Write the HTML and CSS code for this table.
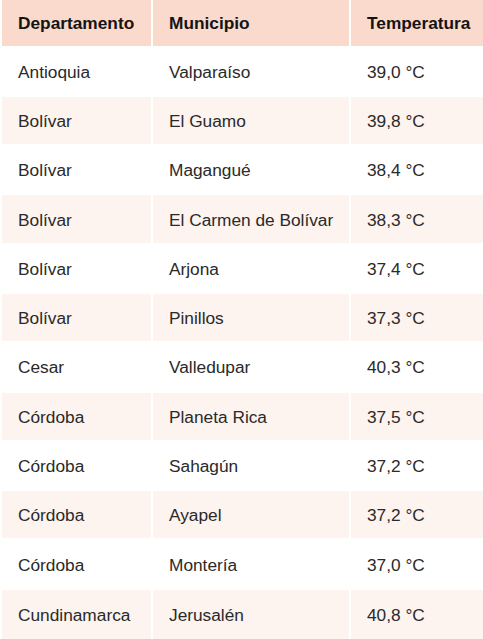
FILE: index.html
```html
<!DOCTYPE html>
<html lang="es">
<head>
<meta charset="utf-8">
<link rel="stylesheet" href="styles.css">
</head>
<body>
<table class="temps">
  <thead>
    <tr><th class="c1">Departamento</th><th class="c2">Municipio</th><th class="c3">Temperatura</th></tr>
  </thead>
  <tbody>
    <tr><td>Antioquia</td><td>Valparaíso</td><td>39,0 °C</td></tr>
    <tr><td>Bolívar</td><td>El Guamo</td><td>39,8 °C</td></tr>
    <tr><td>Bolívar</td><td>Magangué</td><td>38,4 °C</td></tr>
    <tr><td>Bolívar</td><td>El Carmen de Bolívar</td><td>38,3 °C</td></tr>
    <tr><td>Bolívar</td><td>Arjona</td><td>37,4 °C</td></tr>
    <tr><td>Bolívar</td><td>Pinillos</td><td>37,3 °C</td></tr>
    <tr><td>Cesar</td><td>Valledupar</td><td>40,3 °C</td></tr>
    <tr><td>Córdoba</td><td>Planeta Rica</td><td>37,5 °C</td></tr>
    <tr><td>Córdoba</td><td>Sahagún</td><td>37,2 °C</td></tr>
    <tr><td>Córdoba</td><td>Ayapel</td><td>37,2 °C</td></tr>
    <tr><td>Córdoba</td><td>Montería</td><td>37,0 °C</td></tr>
    <tr class="last"><td>Cundinamarca</td><td>Jerusalén</td><td>40,8 °C</td></tr>
  </tbody>
</table>
</body>
</html>
```
FILE: styles.css
```css
html, body {
  margin: 0;
  padding: 0;
  background: #ffffff;
  overflow: hidden;
}
body {
  font-family: "Liberation Sans", Arial, sans-serif;
  font-size: 17.3px;
  color: #2a2a2a;
}
.temps {
  border-collapse: separate;
  border-spacing: 2px;
  margin-top: -2px;
  margin-left: 0;
  table-layout: fixed;
  width: 489px;
}
.temps th, .temps td {
  text-align: left;
  padding: 0 0 0 16px;
  white-space: nowrap;
  overflow: hidden;
}
.temps th {
  height: 44.5px;
  padding-top: 1px;
  background: #f9dacd;
  font-weight: bold;
  color: #141414;
}
.temps td {
  height: 45.3px;
  padding-top: 2px;
}
.temps .last td {
  height: 47.3px;
  padding-top: 2px;
  padding-bottom: 6px;
}
.temps .c1 { width: 133px; }
.temps .c2 { width: 180px; }
.temps .c3 { width: 120px; }
.temps tbody tr:nth-child(even) td {
  background: #fdf3ef;
}
```
